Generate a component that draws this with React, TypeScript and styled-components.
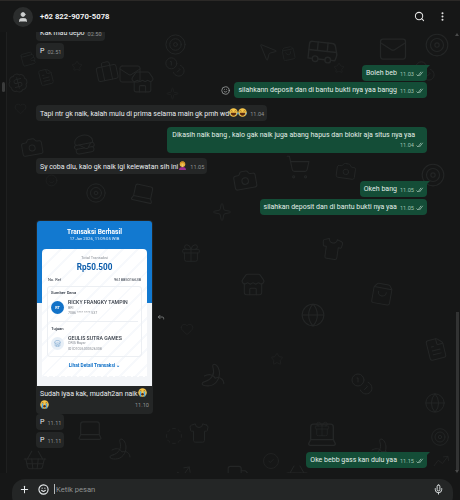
import React from "react";
import styled, { createGlobalStyle } from "styled-components";
import {
  BadgeDollarSign,
  Banana,
  Briefcase,
  Bus,
  Camera,
  CircleCheck,
  CircleDashed,
  Coins,
  FileText,
  Gift,
  Globe,
  Hamburger,
  Heart,
  Laptop,
  Mail,
  Mic,
  MoreVertical,
  MousePointer2,
  Plus,
  Reply,
  Search,
  Shirt,
  ShoppingBag,
  ShoppingBasket,
  ShoppingCart,
  Smile,
  Sparkle,
  Star,
  Store,
  Target,
  TrendingUp,
  Truck,
  User,
  Wallet,
} from "lucide-react";

const GlobalStyle = createGlobalStyle`
  html, body {
    margin: 0;
    background: #161717;
  }
  * { box-sizing: border-box; }
`;

const Shell = styled.div`
  width: 460px;
  height: 500px;
  display: flex;
  flex-direction: column;
  background: #161717;
  color: #e9edef;
  font-family: Roboto, "Liberation Sans", sans-serif;
  border-top: 1px solid #2b2927;
  overflow: hidden;
`;

const Header = styled.header`
  height: 31px;
  flex: none;
  display: flex;
  align-items: center;
  gap: 7px;
  padding: 0 12px 0 13px;
  background: #161717;
`;

const Avatar = styled.div`
  width: 20px;
  height: 20px;
  border-radius: 50%;
  background: #2b2d2d;
  display: flex;
  align-items: center;
  justify-content: center;
  color: #cfd1d1;
`;

const Phone = styled.div`
  flex: 1;
  font-size: 7.7px;
  font-weight: 700;
  color: #f2f2f2;
`;

const HeaderActions = styled.div`
  display: flex;
  align-items: center;
  gap: 12px;
  color: #e6e6e6;
`;

const Body = styled.main`
  position: relative;
  flex: 1;
  min-height: 0;
  overflow: hidden;
`;

const DoodleIcon = styled.span<{ $x: number; $y: number; $r: number }>`
  position: absolute;
  left: ${(p) => p.$x}px;
  top: ${(p) => p.$y}px;
  transform: rotate(${(p) => p.$r}deg);
  color: #242626;
  display: flex;
`;

const LeftRail = styled.div`
  position: absolute;
  left: 0;
  top: 0;
  bottom: 0;
  width: 7px;
  border-right: 1px solid #1f2020;
  background: #141515;
`;

const LeftThumb = styled.div`
  position: absolute;
  left: 2px;
  top: 50px;
  width: 3px;
  height: 10px;
  border-radius: 2px;
  background: #3b3c3c;
`;

const RightThumb = styled.div`
  position: absolute;
  right: 1px;
  top: 280px;
  width: 3px;
  height: 158px;
  background: #323333;
`;

const ScrollArrow = styled.div<{ $down?: boolean }>`
  position: absolute;
  right: 1px;
  ${(p) => (p.$down ? "bottom: 0;" : "top: 1px;")}
  width: 0;
  height: 0;
  border-left: 2px solid transparent;
  border-right: 2px solid transparent;
  ${(p) =>
    p.$down ? "border-top: 3px solid #4a4b4b;" : "border-bottom: 3px solid #4a4b4b;"}
`;

const MessageList = styled.div`
  position: absolute;
  inset: 0;
  display: flex;
  flex-direction: column;
  justify-content: flex-end;
  padding: 0 33px 5px 36px;
`;

const Row = styled.div<{ $out?: boolean; $top: number }>`
  display: flex;
  flex: none;
  align-items: center;
  gap: 4px;
  justify-content: ${(p) => (p.$out ? "flex-end" : "flex-start")};
  margin-top: ${(p) => p.$top}px;
`;

const Bubble = styled.div<{ $out?: boolean; $tail?: boolean }>`
  position: relative;
  display: flex;
  align-items: flex-end;
  gap: 3px;
  padding: 3px 3px 3px 4px;
  height: 16px;
  border-radius: 4px;
  font-size: 7px;
  line-height: 10px;
  white-space: nowrap;
  background: ${(p) => (p.$out ? "#144d37" : "#242626")};
  color: ${(p) => (p.$out ? "#e3efe9" : "#e9edef")};
  ${(p) => p.$tail && "border-top-right-radius: 0;"}
  ${(p) =>
    p.$tail &&
    `&::after {
      content: "";
      position: absolute;
      top: 0;
      right: -3px;
      border-top: 3px solid #144d37;
      border-right: 3px solid transparent;
    }`}
`;

const TallBubble = styled(Bubble)`
  flex-direction: column;
  align-items: stretch;
  height: 26px;
  padding: 3px 3px 2px 5px;
  gap: 1px;
`;

const LongText = styled.span`
  padding-right: 9px;
`;

const Meta = styled.span<{ $out?: boolean }>`
  display: inline-flex;
  align-items: center;
  gap: 2px;
  align-self: flex-end;
  justify-content: flex-end;
  font-size: 5.6px;
  line-height: 8px;
  color: ${(p) => (p.$out ? "#9fc0b1" : "#8f9292")};
`;

const Ticks = styled.svg`
  width: 8px;
  height: 6px;
  fill: none;
  stroke: #9fc0b1;
  stroke-width: 0.8;
`;

const Face = styled.svg`
  width: 9px;
  height: 9px;
  vertical-align: -1.5px;
`;

const MediaBubble = styled.div`
  width: 117px;
  height: 194px;
  padding: 1px 1px 0;
  background: #242626;
  border-radius: 4px;
  font-size: 7px;
  line-height: 11px;
`;

const Caption = styled.div`
  padding: 2px 3px 0;
`;

const CaptionFoot = styled.div`
  display: flex;
  justify-content: space-between;
  align-items: flex-end;
`;

const Receipt = styled.div`
  height: 165px;
  border-radius: 3px 3px 0 0;
  background: linear-gradient(#1279d0 82px, #f3f5f8 82px);
  display: flex;
  flex-direction: column;
  align-items: center;
  padding: 7px 5px 7px;
  color: #2c3440;
  filter: blur(0.2px);
`;

const ReceiptTitle = styled.div`
  font-size: 6.6px;
  line-height: 8px;
  font-weight: 700;
  color: #fff;
`;

const ReceiptDate = styled.div`
  font-size: 4.2px;
  line-height: 6px;
  color: #e4f0fb;
  margin-bottom: 7px;
`;

const ReceiptCard = styled.div`
  width: 100%;
  flex: 1;
  border-radius: 4px 4px 0 0;
  padding: 6px 6px 0;
  display: flex;
  flex-direction: column;
  background: repeating-linear-gradient(
      -45deg,
      transparent 0 9px,
      #f7f9fc 9px 11px
    ),
    #fff;

  &::after {
    content: "";
    margin: auto -6px 0;
    height: 4px;
    background: radial-gradient(circle at 3px 4px, #f3f5f8 3px, transparent 3.5px) 0 0 / 6px 4px repeat-x;
  }
`;

const Total = styled.div`
  font-size: 4px;
  line-height: 5px;
  color: #8a8f96;
  text-align: center;
`;

const Amount = styled.div`
  font-size: 8.2px;
  line-height: 11px;
  font-weight: 700;
  color: #0b5cab;
  text-align: center;
  margin: 2px 0 4px;
`;

const RefRow = styled.div`
  display: flex;
  justify-content: space-between;
  font-size: 4px;
  line-height: 5px;
  margin-bottom: 4px;
`;

const Panel = styled.div`
  border: 1px solid #eceff3;
  border-radius: 3px;
  padding: 3px 3px 4px;
  margin: 0 -1px;
  display: flex;
  flex-direction: column;
  gap: 3px;
`;

const PanelLabel = styled.div`
  font-size: 4.2px;
  line-height: 6px;
  font-weight: 500;
`;

const Party = styled.div`
  display: flex;
  align-items: center;
  gap: 4px;
`;

const PartyIcon = styled.div<{ $solid?: boolean }>`
  width: 13px;
  height: 13px;
  border-radius: 50%;
  flex: none;
  display: flex;
  align-items: center;
  justify-content: center;
  font-size: 3.8px;
  font-weight: 700;
  background: ${(p) => (p.$solid ? "#1272c8" : "#e7eff7")};
  color: ${(p) => (p.$solid ? "#fff" : "#7aa6cf")};
`;

const PartyName = styled.div`
  font-size: 5.2px;
  line-height: 6.5px;
  font-weight: 500;
  white-space: nowrap;
  color: #333a44;
`;

const PartyInfo = styled.div`
  font-size: 3.6px;
  line-height: 5.5px;
  color: #8a8f96;
`;

const PanelRule = styled.div`
  height: 1px;
  background: #eceff3;
  margin: 1px 0;
`;

const DetailLink = styled.div`
  margin-top: 6px;
  text-align: center;
  font-size: 4.8px;
  line-height: 6px;
  font-weight: 700;
  color: #1272c8;
`;

const Footer = styled.footer`
  flex: none;
  height: 27px;
  padding: 6px 7px 0 12px;
`;

const InputBar = styled.div`
  height: 30px;
  border-radius: 13px;
  background: #242626;
  display: flex;
  align-items: flex-start;
  gap: 8px;
  padding: 5px 9px 0 7px;
  color: #e9edef;
`;

const Placeholder = styled.div`
  flex: 1;
  font-size: 7.6px;
  line-height: 11px;
  color: #8f9292;
  border-left: 1px solid #b5b8b8;
  padding-left: 1px;
  height: 10px;
  margin-left: -3px;
`;

const doodles = [
  { Icon: Mail, x: 118, y: 30, s: 24, r: 0 },
  { Icon: Target, x: 164, y: 1, s: 23, r: 0 },
  { Icon: Coins, x: 164, y: 24, s: 22, r: 0 },
  { Icon: Briefcase, x: 95, y: 28, s: 24, r: -12 },
  { Icon: Wallet, x: 20, y: 19, s: 16, r: -15 },
  { Icon: Star, x: 71, y: 28, s: 12, r: 0 },
  { Icon: Store, x: 130, y: 38, s: 25, r: 0 },
  { Icon: BadgeDollarSign, x: 7, y: 40, s: 22, r: -14 },
  { Icon: FileText, x: 37, y: 36, s: 18, r: -14 },
  { Icon: Heart, x: 14, y: 70, s: 13, r: 0 },
  { Icon: Sparkle, x: 166, y: 55, s: 13, r: 0 },
  { Icon: Bus, x: 306, y: 2, s: 34, r: 6 },
  { Icon: MousePointer2, x: 257, y: 9, s: 22, r: 0 },
  { Icon: ShoppingBag, x: 281, y: 14, s: 15, r: -12 },
  { Icon: Mail, x: 378, y: 2, s: 30, r: 0 },
  { Icon: Target, x: 424, y: 0, s: 26, r: 0 },
  { Icon: Coins, x: 414, y: 28, s: 22, r: 0 },
  { Icon: Star, x: 333, y: 30, s: 12, r: 0 },
  { Icon: Hamburger, x: 72, y: 100, s: 24, r: -10 },
  { Icon: Camera, x: 20, y: 103, s: 24, r: -10 },
  { Icon: Target, x: 85, y: 150, s: 22, r: 0 },
  { Icon: Smile, x: 45, y: 142, s: 13, r: 0 },
  { Icon: Laptop, x: 130, y: 148, s: 26, r: 12 },
  { Icon: ShoppingCart, x: 285, y: 122, s: 26, r: 0 },
  { Icon: Camera, x: 232, y: 135, s: 26, r: -10 },
  { Icon: Sparkle, x: 212, y: 170, s: 20, r: 0 },
  { Icon: Camera, x: 335, y: 128, s: 22, r: 8 },
  { Icon: Target, x: 420, y: 130, s: 26, r: 0 },
  { Icon: Gift, x: 180, y: 210, s: 22, r: 0 },
  { Icon: Shirt, x: 320, y: 205, s: 24, r: 8 },
  { Icon: Globe, x: 300, y: 270, s: 26, r: 0 },
  { Icon: Globe, x: 424, y: 360, s: 22, r: 0 },
  { Icon: FileText, x: 424, y: 305, s: 24, r: -14 },
  { Icon: Store, x: 240, y: 240, s: 26, r: 0 },
  { Icon: ShoppingBag, x: 370, y: 250, s: 24, r: 10 },
  { Icon: Banana, x: 200, y: 330, s: 26, r: 0 },
  { Icon: Coins, x: 350, y: 340, s: 24, r: 0 },
  { Icon: Heart, x: 180, y: 290, s: 14, r: 0 },
  { Icon: Star, x: 270, y: 320, s: 14, r: 0 },
  { Icon: Laptop, x: 76, y: 384, s: 28, r: 0 },
  { Icon: Gift, x: 313, y: 388, s: 18, r: 0 },
  { Icon: Laptop, x: 305, y: 385, s: 34, r: 0 },
  { Icon: Banana, x: 108, y: 405, s: 24, r: 0 },
  { Icon: ShoppingBasket, x: 22, y: 415, s: 26, r: 0 },
  { Icon: Shirt, x: 188, y: 390, s: 22, r: 0 },
  { Icon: CircleDashed, x: 165, y: 395, s: 18, r: 0 },
  { Icon: TrendingUp, x: 170, y: 430, s: 22, r: -10 },
  { Icon: Truck, x: 226, y: 430, s: 26, r: 0 },
  { Icon: CircleCheck, x: 262, y: 420, s: 18, r: 0 },
  { Icon: ShoppingBasket, x: 285, y: 430, s: 24, r: 0 },
  { Icon: Banana, x: 368, y: 405, s: 24, r: 0 },
  { Icon: TrendingUp, x: 432, y: 420, s: 18, r: -8 },
  { Icon: Target, x: 430, y: 395, s: 20, r: 0 },
];

const DoubleTick = () => (
  <Ticks viewBox="0 0 8 6">
    <path d="M0.5 3.5 2 5 5 0.8" />
    <path d="M3 4.5 3.5 5 6.8 0.8" />
  </Ticks>
);

const LaughEmoji = () => (
  <Face viewBox="0 0 18 18">
    <circle cx="9" cy="9" r="8.5" fill="#f7c548" />
    <path d="M3 6.5q2-2 4 0M11 6.5q2-2 4 0" stroke="#5b3a10" strokeWidth="1.2" fill="none" />
    <path d="M3.5 9.5h11q-.5 6-5.5 6t-5.5-6z" fill="#5b2a10" />
    <path d="M0 8.5q3 1 3.5 5-3 .5-3.5-5zM18 8.5q-3 1-3.5 5 3 .5 3.5-5z" fill="#4aa8e8" />
  </Face>
);

const CryEmoji = () => (
  <Face viewBox="0 0 18 18">
    <circle cx="9" cy="9" r="8.5" fill="#f7c548" />
    <path d="M3.5 6q2-1.5 3.5 0M11 6q1.500-1.500 3.500 0" stroke="#5b3a10" strokeWidth="1.2" fill="none" />
    <rect x="3.5" y="7" width="3" height="10" fill="#4aa8e8" />
    <rect x="11.5" y="7" width="3" height="10" fill="#4aa8e8" />
    <ellipse cx="9" cy="12.5" rx="2.5" ry="2.5" fill="#5b2a10" />
  </Face>
);

const FacepalmEmoji = () => (
  <Face viewBox="0 0 18 18">
    <path d="M2 18q0-6 7-6t7 6z" fill="#9c2f8f" />
    <circle cx="9" cy="6.5" r="5.5" fill="#e8b23c" />
    <path d="M3.5 6q.5-5.500 5.500-5.500T14.500 6q-3-3-5.500-3T3.500 6z" fill="#c98a20" />
    <rect x="7.5" y="6" width="3" height="6" rx="1.5" fill="#f3c76a" />
  </Face>
);

const App: React.FC = () => (
  <Shell>
    <GlobalStyle />
    <Header>
      <Avatar>
        <User size={12} fill="currentColor" strokeWidth={1.5} />
      </Avatar>
      <Phone>+62 822-9070-5078</Phone>
      <HeaderActions>
        <Search size={11} strokeWidth={2.2} />
        <MoreVertical size={11} strokeWidth={2.4} />
      </HeaderActions>
    </Header>

    <Body>
      {doodles.map(({ Icon, x, y, s, r }, i) => (
        <DoodleIcon key={i} $x={x} $y={y} $r={r}>
          <Icon size={s} strokeWidth={1} />
        </DoodleIcon>
      ))}
      <LeftRail>
        <LeftThumb />
      </LeftRail>
      <ScrollArrow />
      <RightThumb />
      <ScrollArrow $down />

      <MessageList>
        <Row $top={0}>
          <Bubble>
            Kak mau depo <Meta>02.50</Meta>
          </Bubble>
        </Row>
        <Row $top={2}>
          <Bubble>
            P <Meta>02.51</Meta>
          </Bubble>
        </Row>
        <Row $out $top={6}>
          <Bubble $out $tail>
            Boleh beb
            <Meta $out>
              11.03 <DoubleTick />
            </Meta>
          </Bubble>
        </Row>
        <Row $out $top={1}>
          <Smile size={9} color="#a8abab" />
          <Bubble $out>
            silahkann deposit dan di bantu bukti nya yaa bangg
            <Meta $out>
              11.03 <DoubleTick />
            </Meta>
          </Bubble>
        </Row>
        <Row $top={7}>
          <Bubble>
            <span>
              Tapi ntr gk naik, kalah mulu di prima selama main gk pmh wd
              <LaughEmoji />
              <LaughEmoji />
            </span>
            <Meta>11.04</Meta>
          </Bubble>
        </Row>
        <Row $out $top={6}>
          <TallBubble $out>
            <LongText>
              Dikasih naik bang , kalo gak naik juga abang hapus dan blokir aja situs nya yaa
            </LongText>
            <Meta $out>
              11.04 <DoubleTick />
            </Meta>
          </TallBubble>
        </Row>
        <Row $top={5}>
          <Bubble>
            <span>
              Sy coba dlu, kalo gk naik lgi kelewatan sih ini
              <FacepalmEmoji />
            </span>
            <Meta>11.05</Meta>
          </Bubble>
        </Row>
        <Row $out $top={7}>
          <Bubble $out $tail>
            Okeh bang
            <Meta $out>
              11.05 <DoubleTick />
            </Meta>
          </Bubble>
        </Row>
        <Row $out $top={2}>
          <Bubble $out>
            silahkan deposit dan di bantu bukti nya yaa
            <Meta $out>
              11.05 <DoubleTick />
            </Meta>
          </Bubble>
        </Row>
        <Row $top={5}>
          <MediaBubble>
            <Receipt>
              <ReceiptTitle>Transaksi Berhasil</ReceiptTitle>
              <ReceiptDate>17 Jan 2026, 11:09:05 WIB</ReceiptDate>
              <ReceiptCard>
                <Total>Total Transaksi</Total>
                <Amount>Rp50.500</Amount>
                <RefRow>
                  <span>No. Ref</span>
                  <span>961885016638</span>
                </RefRow>
                <Panel>
                  <PanelLabel>Sumber Dana</PanelLabel>
                  <Party>
                    <PartyIcon $solid>RT</PartyIcon>
                    <div>
                      <PartyName>RICKY FRANGKY TAMPIN</PartyName>
                      <PartyInfo>BRI</PartyInfo>
                      <PartyInfo>7086 **** **** 537</PartyInfo>
                    </div>
                  </Party>
                  <PanelRule />
                  <PanelLabel>Tujuan</PanelLabel>
                  <Party>
                    <PartyIcon>
                      <Store size={7} />
                    </PartyIcon>
                    <div>
                      <PartyName>GEULIS SUTRA GAMES</PartyName>
                      <PartyInfo>ORIS Bayar</PartyInfo>
                      <PartyInfo>ID ID1026000526308</PartyInfo>
                    </div>
                  </Party>
                </Panel>
                <DetailLink>Lihat Detail Transaksi ⌄</DetailLink>
              </ReceiptCard>
            </Receipt>
            <Caption>
              Sudah iyaa kak, mudah2an naik
              <CryEmoji />
              <CaptionFoot>
                <CryEmoji />
                <Meta>11.10</Meta>
              </CaptionFoot>
            </Caption>
          </MediaBubble>
          <Reply size={8} color="#9a9d9d" />
        </Row>
        <Row $top={0}>
          <Bubble>
            P <Meta>11.11</Meta>
          </Bubble>
        </Row>
        <Row $top={2}>
          <Bubble>
            P <Meta>11.11</Meta>
          </Bubble>
        </Row>
        <Row $out $top={4}>
          <Bubble $out $tail>
            Oke bebb gass kan dulu yaa
            <Meta $out>
              11.15 <DoubleTick />
            </Meta>
          </Bubble>
        </Row>
      </MessageList>
    </Body>

    <Footer>
      <InputBar>
        <Plus size={11} strokeWidth={2.2} />
        <Smile size={11} strokeWidth={2.4} />
        <Placeholder>Ketik pesan</Placeholder>
        <Mic size={11} strokeWidth={2} />
      </InputBar>
    </Footer>
  </Shell>
);

export default App;
